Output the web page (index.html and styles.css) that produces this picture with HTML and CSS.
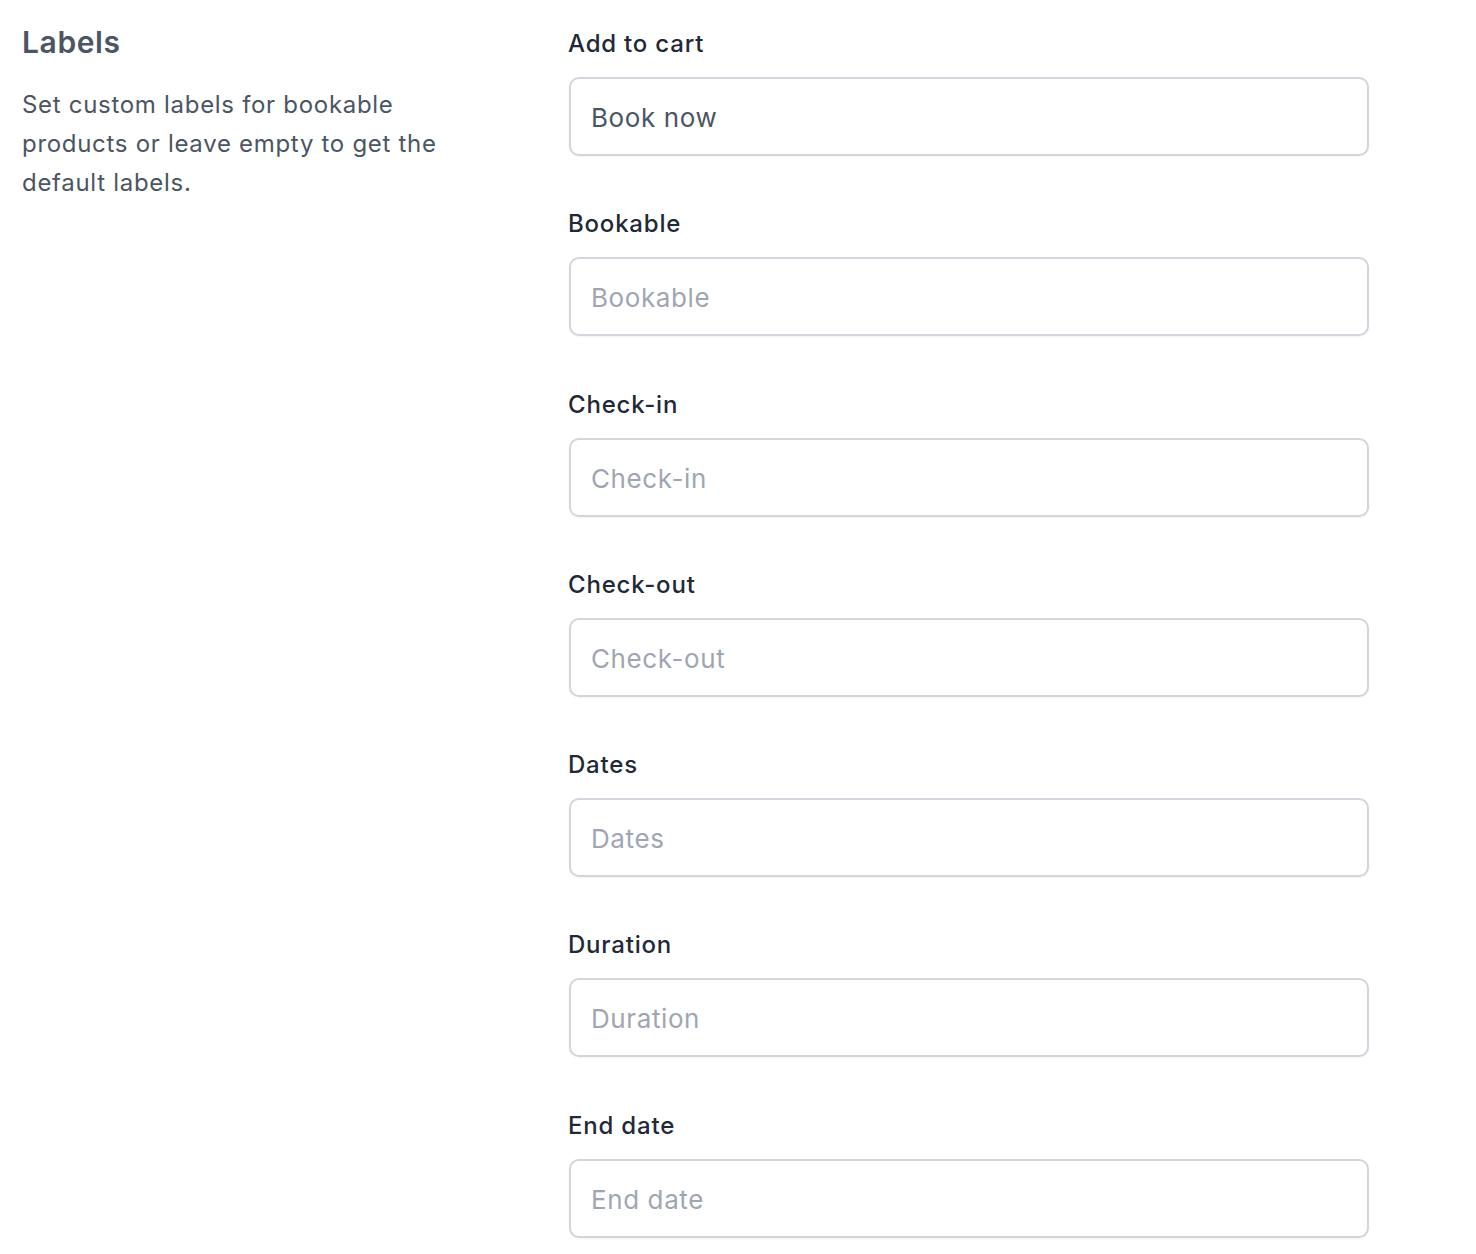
FILE: index.html
```html
<!DOCTYPE html>
<html lang="en">
<head>
    <meta charset="UTF-8">
    <meta name="viewport" content="width=device-width, initial-scale=1.0">
    <title>Labels</title>
    <link rel="stylesheet" href="styles.css">
</head>
<body>
    <div class="section">
        <div class="intro">
            <h2>Labels</h2>
            <p>Set custom labels for bookable products or leave empty to get the default labels.</p>
        </div>

        <form class="fields">
            <div class="field">
                <label for="add_to_cart">Add to cart</label>
                <input type="text" id="add_to_cart" value="Book now">
            </div>
            <div class="field">
                <label for="bookable">Bookable</label>
                <input type="text" id="bookable" placeholder="Bookable">
            </div>
            <div class="field">
                <label for="check_in">Check-in</label>
                <input type="text" id="check_in" placeholder="Check-in">
            </div>
            <div class="field">
                <label for="check_out">Check-out</label>
                <input type="text" id="check_out" placeholder="Check-out">
            </div>
            <div class="field">
                <label for="dates">Dates</label>
                <input type="text" id="dates" placeholder="Dates">
            </div>
            <div class="field">
                <label for="duration">Duration</label>
                <input type="text" id="duration" placeholder="Duration">
            </div>
            <div class="field">
                <label for="end_date">End date</label>
                <input type="text" id="end_date" placeholder="End date">
            </div>
        </form>
    </div>
</body>
</html>
```

FILE: styles.css
```css
body { margin: 0; background: #fff; font-family: Inter, "Noto Sans", sans-serif; -webkit-font-smoothing: antialiased; }
.section { display: grid; grid-template-columns: 460px 800px; column-gap: 86px; padding: 24px 0 0 22px; }
.intro h2 { margin: 0; font-size: 30px; line-height: 36px; font-weight: 600; color: #4b5563; letter-spacing: 0.6px; }
.intro p { margin: 25px 0 0; max-width: 440px; font-size: 24px; line-height: 39px; color: #4b5563; letter-spacing: 0.7px; }
.fields { margin: 4px 0 0; }
.field { margin-bottom: 52.3px; }
.field label { display: block; font-size: 24px; line-height: 32px; font-weight: 500; color: #1f2937; margin-bottom: 17px; letter-spacing: 0.8px; }
.field input { box-sizing: border-box; display: block; width: 800px; height: 79px; margin-left: 1px; padding: 2px 20px 0; border: 2px solid #d2d6dc; border-radius: 10px; box-shadow: 0 1px 2px rgba(0, 0, 0, 0.05); font-family: inherit; font-size: 26px; color: #4b5563; letter-spacing: 0.6px; background: #fff; outline: none; }
.field input::placeholder { color: #9fa6b2; opacity: 1; }
```
